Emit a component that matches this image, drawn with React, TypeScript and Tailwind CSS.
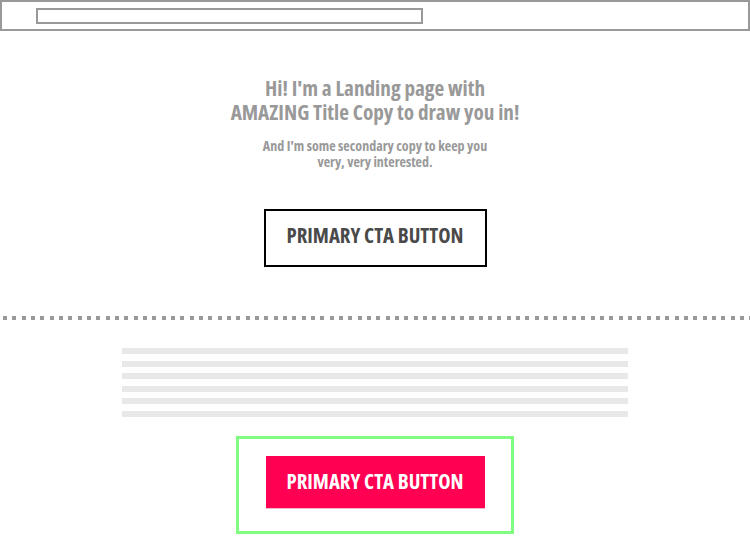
const font = "font-['Open_Sans',sans-serif] [font-stretch:75%] font-bold"

function TextBars() {
  return (
    <div className="mt-[28px] mx-auto w-[506px] flex flex-col gap-[6.6px]">
      {[0, 1, 2, 3, 4, 5].map((i) => (
        <div key={i} className="h-[6px] bg-[#e8e8e8]" />
      ))}
    </div>
  )
}

export default function App() {
  return (
    <div className="w-[750px] h-[550px] bg-white overflow-hidden">
      {/* browser bar */}
      <div className="h-[31px] border-2 border-[#999]">
        <div className="ml-[34px] mt-[6px] w-[387px] h-[16px] border-2 border-[#999]" />
      </div>

      {/* hero */}
      <div className="mt-[45px] flex flex-col items-center text-center">
        <h1 className={`${font} text-[21.2px] leading-[24px] text-[#999]`}>
          Hi! I'm a Landing page with
          <br />
          AMAZING Title Copy to draw you in!
        </h1>
        <p className={`${font} mt-[14px] text-[14px] leading-[16px] text-[#999]`}>
          And I'm some secondary copy to keep you
          <br />
          very, very interested.
        </p>
        <button className={`${font} mt-[39px] w-[223px] h-[58px] pb-[5px] border-2 border-black text-[20.8px] text-[#4a4a4a]`}>
          PRIMARY CTA BUTTON
        </button>
      </div>

      {/* divider */}
      <div className="mt-[49px] h-[4px] bg-[repeating-linear-gradient(90deg,transparent_0_3px,#999_3px_7px,transparent_7px_9.33px)]" />

      <TextBars />

      <div className="mt-[19px] mx-auto w-[278px] h-[98px] border-[3px] border-[#80fc80] pt-[17px] flex justify-center">
        <button className={`${font} w-[219px] h-[53px] pb-[1px] bg-[#ff0052] border-b border-[#f4b8cc] text-[20.8px] text-white`}>
          PRIMARY CTA BUTTON
        </button>
      </div>
    </div>
  )
}
